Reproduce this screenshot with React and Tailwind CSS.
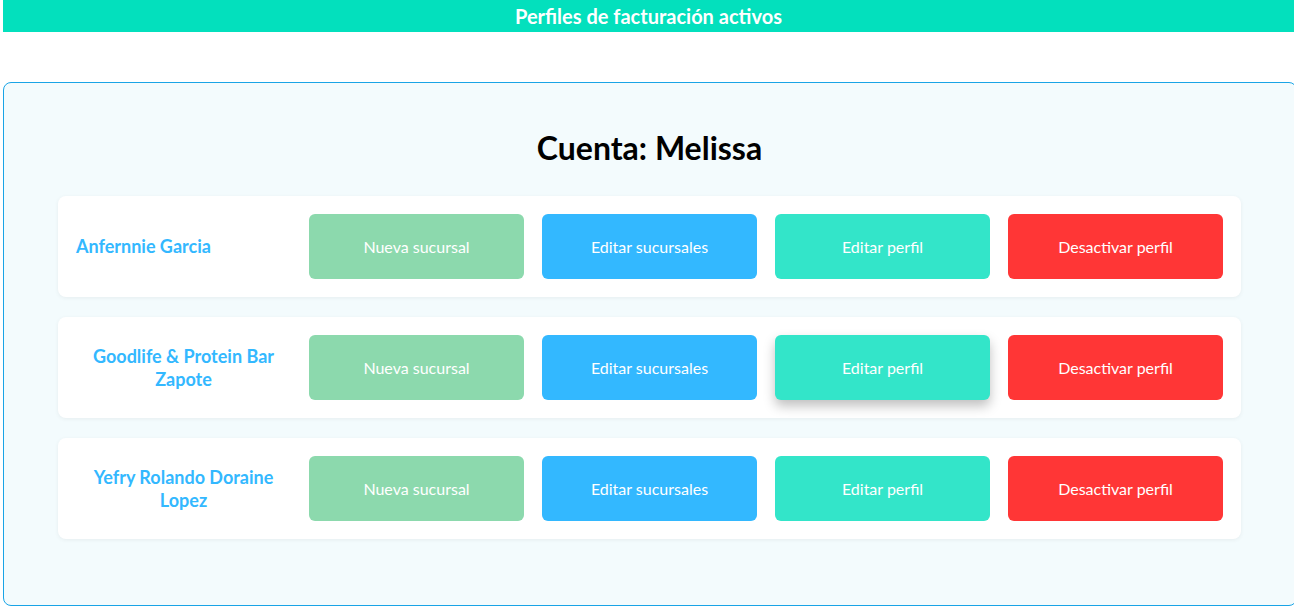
import React from "react";

const rows = [
  { name: "Anfernnie Garcia" },
  { name: "Goodlife & Protein Bar Zapote", hover: true },
  { name: "Yefry Rolando Doraine Lopez" },
];

function Row({ name, hover }) {
  return (
    <div className="flex items-center h-[101px] rounded-lg bg-white px-[18px] shadow-[0_1px_4px_rgba(0,0,0,0.06)]">
      <div className="w-[233px] shrink-0 flex">
        <span className="inline-block w-fit max-w-[215px] text-center text-[18px] leading-[23px] font-bold text-[#33b8ff]">
          {name}
        </span>
      </div>
      <div className="flex gap-[18px]">
        <button className="w-[215px] h-[65px] rounded-md bg-[#8cd9ad] text-white text-[16px]">Nueva sucursal</button>
        <button className="w-[215px] h-[65px] rounded-md bg-[#33b8ff] text-white text-[16px]">Editar sucursales</button>
        <button className={"w-[215px] h-[65px] rounded-md bg-[#33e5c9] text-white text-[16px] " + (hover ? "shadow-[0_6px_12px_rgba(0,0,0,0.25)]" : "")}>Editar perfil</button>
        <button className="w-[215px] h-[65px] rounded-md bg-[#ff3636] text-white text-[16px]">Desactivar perfil</button>
      </div>
    </div>
  );
}

export default function App() {
  return (
    <div className="w-[1294px] h-[607px] overflow-hidden bg-white font-['Lato','Open_Sans',sans-serif] pl-[3px]">
      <div className="h-[32px] bg-[#03e0bd] flex items-center justify-center text-white font-bold text-[20px]">
        Perfiles de facturación activos
      </div>
      <div className="mt-[50px] w-[1294px] h-[524px] rounded-lg border border-[#19a4e6] bg-[#f3fbfd] pt-[45px] px-[54px]">
        <h1 className="text-center text-[32px] font-bold text-black leading-[40px] mr-[1px]">Cuenta: Melissa</h1>
        <div className="mt-[28px] w-[1183px] flex flex-col gap-[20px]">
          {rows.map((r) => (
            <Row key={r.name} {...r} />
          ))}
        </div>
      </div>
    </div>
  );
}
